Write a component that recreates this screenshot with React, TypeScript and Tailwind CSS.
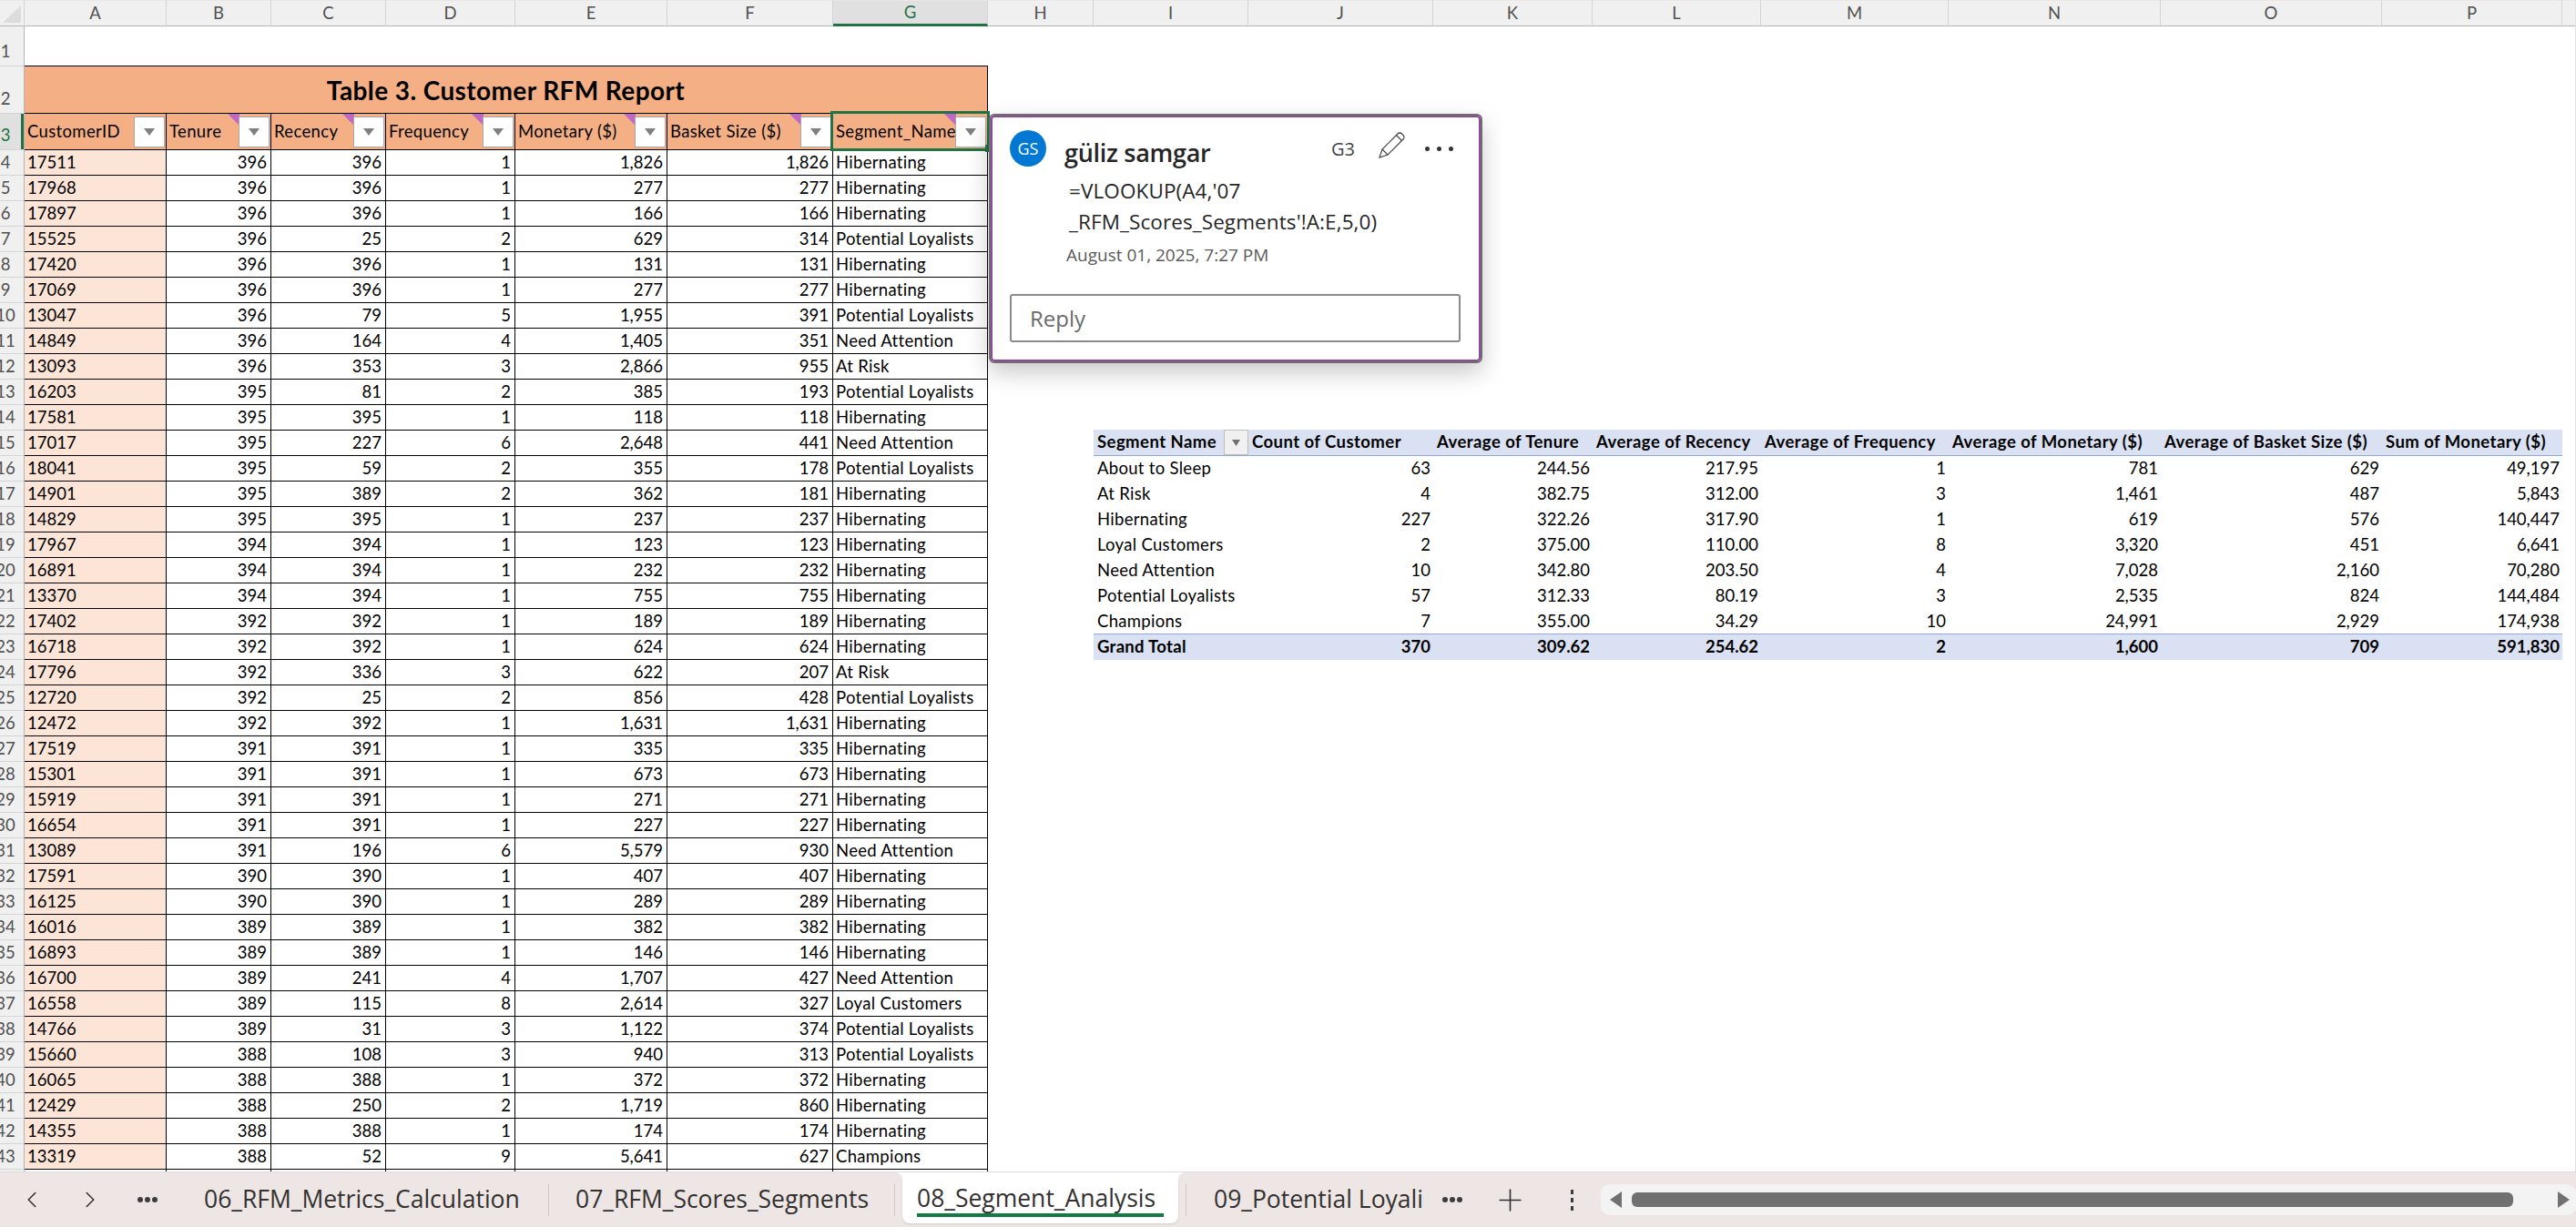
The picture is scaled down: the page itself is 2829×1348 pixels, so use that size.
import React from 'react';
import { ChevronLeft, ChevronRight, Plus } from 'lucide-react';

const COLUMNS = ['A', 'B', 'C', 'D', 'E', 'F', 'G', 'H', 'I', 'J', 'K', 'L', 'M', 'N', 'O', 'P', ''];

const H = 'Hibernating';
const PL = 'Potential Loyalists';
const NA = 'Need Attention';

const CUSTOMERS: string[][] = [
  ['17511', '396', '396', '1', '1,826', '1,826', H],
  ['17968', '396', '396', '1', '277', '277', H],
  ['17897', '396', '396', '1', '166', '166', H],
  ['15525', '396', '25', '2', '629', '314', PL],
  ['17420', '396', '396', '1', '131', '131', H],
  ['17069', '396', '396', '1', '277', '277', H],
  ['13047', '396', '79', '5', '1,955', '391', PL],
  ['14849', '396', '164', '4', '1,405', '351', NA],
  ['13093', '396', '353', '3', '2,866', '955', 'At Risk'],
  ['16203', '395', '81', '2', '385', '193', PL],
  ['17581', '395', '395', '1', '118', '118', H],
  ['17017', '395', '227', '6', '2,648', '441', NA],
  ['18041', '395', '59', '2', '355', '178', PL],
  ['14901', '395', '389', '2', '362', '181', H],
  ['14829', '395', '395', '1', '237', '237', H],
  ['17967', '394', '394', '1', '123', '123', H],
  ['16891', '394', '394', '1', '232', '232', H],
  ['13370', '394', '394', '1', '755', '755', H],
  ['17402', '392', '392', '1', '189', '189', H],
  ['16718', '392', '392', '1', '624', '624', H],
  ['17796', '392', '336', '3', '622', '207', 'At Risk'],
  ['12720', '392', '25', '2', '856', '428', PL],
  ['12472', '392', '392', '1', '1,631', '1,631', H],
  ['17519', '391', '391', '1', '335', '335', H],
  ['15301', '391', '391', '1', '673', '673', H],
  ['15919', '391', '391', '1', '271', '271', H],
  ['16654', '391', '391', '1', '227', '227', H],
  ['13089', '391', '196', '6', '5,579', '930', NA],
  ['17591', '390', '390', '1', '407', '407', H],
  ['16125', '390', '390', '1', '289', '289', H],
  ['16016', '389', '389', '1', '382', '382', H],
  ['16893', '389', '389', '1', '146', '146', H],
  ['16700', '389', '241', '4', '1,707', '427', NA],
  ['16558', '389', '115', '8', '2,614', '327', 'Loyal Customers'],
  ['14766', '389', '31', '3', '1,122', '374', PL],
  ['15660', '388', '108', '3', '940', '313', PL],
  ['16065', '388', '388', '1', '372', '372', H],
  ['12429', '388', '250', '2', '1,719', '860', H],
  ['14355', '388', '388', '1', '174', '174', H],
  ['13319', '388', '52', '9', '5,641', '627', 'Champions'],
];

const PIVOT_HEADERS = [
  'Segment Name',
  'Count of Customer',
  'Average of Tenure',
  'Average of Recency',
  'Average of Frequency',
  'Average of Monetary ($)',
  'Average of Basket Size ($)',
  'Sum of Monetary ($)',
];

const PIVOT_ROWS: string[][] = [
  ['About to Sleep', '63', '244.56', '217.95', '1', '781', '629', '49,197'],
  ['At Risk', '4', '382.75', '312.00', '3', '1,461', '487', '5,843'],
  ['Hibernating', '227', '322.26', '317.90', '1', '619', '576', '140,447'],
  ['Loyal Customers', '2', '375.00', '110.00', '8', '3,320', '451', '6,641'],
  ['Need Attention', '10', '342.80', '203.50', '4', '7,028', '2,160', '70,280'],
  ['Potential Loyalists', '57', '312.33', '80.19', '3', '2,535', '824', '144,484'],
  ['Champions', '7', '355.00', '34.29', '10', '24,991', '2,929', '174,938'],
];

const PIVOT_TOTAL = ['Grand Total', '370', '309.62', '254.62', '2', '1,600', '709', '591,830'];

const TABLE_HEADERS = [
  { label: 'CustomerID', note: false },
  { label: 'Tenure', note: true },
  { label: 'Recency', note: true },
  { label: 'Frequency', note: true },
  { label: 'Monetary ($)', note: true },
  { label: 'Basket Size ($)', note: true },
  { label: 'Segment_Name', note: true },
];

const Arrow = () => (
  <svg width="12" height="8" viewBox="0 0 12 8">
    <path d="M0 0h12L6 8z" fill="#808080" />
  </svg>
);

const RowHeader = ({ n, active = false, bottom = false }: { n: string; active?: boolean; bottom?: boolean }) => (
  <div
    className={`relative flex overflow-hidden border-r border-b border-r-[#b4b4b4] border-b-[#d4d4d4] text-[18.5px] ${
      bottom ? 'items-end pb-[1px]' : 'items-center'
    } ${active ? 'bg-[#e0e0e0] text-[#217346]' : 'bg-[#f0f0f0] text-[#505050]'}`}
  >
    <div className="flex w-[12px] shrink-0 justify-center whitespace-nowrap">{n}</div>
    {active && <div className="absolute top-0 right-0 bottom-0 w-[3px] bg-[#217346]" />}
  </div>
);

const Dots = () => (
  <div className="flex w-[24px] shrink-0 justify-center gap-[2px]">
    <span className="h-[6px] w-[6px] rounded-full bg-[#3c3c3c]" />
    <span className="h-[6px] w-[6px] rounded-full bg-[#3c3c3c]" />
    <span className="h-[6px] w-[6px] rounded-full bg-[#3c3c3c]" />
  </div>
);

const Separator = () => <div className="h-[36px] w-px shrink-0 bg-[#d0cbc9]" />;

const PivotCell = ({ value, col, row }: { value: string; col: number; row: 'head' | 'body' | 'last' | 'total' }) => {
  const align = col === 0 || row === 'head' ? 'justify-start' : 'justify-end';
  const tone =
    row === 'head'
      ? '-mt-px bg-[#d9e1f2] border-b border-[#8ea9db] font-bold tracking-[0.45px]'
      : row === 'total'
        ? 'bg-[#d9e1f2] font-bold'
        : row === 'last'
          ? 'border-b border-[#8ea9db]'
          : '';
  return (
    <div
      className={`relative flex items-center whitespace-nowrap px-[4px] pr-[3px] ${align} ${tone} ${
        col === 0 && row !== 'head' ? 'tracking-[0.3px]' : ''
      }`}
    >
      {value}
      {row === 'head' && col === 0 && (
        <div className="absolute top-0 right-0 flex h-[28px] w-[27px] items-center justify-center border border-[#bdbdbd] bg-[#f1f1f1]">
          <svg width="9" height="7" viewBox="0 0 9 7">
            <path d="M0 0h9L4.5 7z" fill="#707070" />
          </svg>
        </div>
      )}
    </div>
  );
};

export default function App() {
  return (
    <div className="relative h-[1348px] w-[2829px] overflow-hidden bg-white font-['Lato',sans-serif] text-[18.5px] text-black">
      <div className="h-[1287px] overflow-hidden border-r border-[#e2e2e2]">
        <div className="grid grid-cols-[27px_156px_115px_126px_142px_167px_182px_170px_116px_170px_203px_175px_185px_206px_233px_243px_198px_15px] grid-rows-[29px_44px_52px_40px] auto-rows-[28px]">
          <div className="flex items-end justify-center border-t border-r border-b border-t-[#eee6e4] border-r-[#d4d4d4] border-b-[#b4b4b4] bg-[#f0f0f0] pb-[3px]">
            <svg width="20" height="19" viewBox="0 0 20 19">
              <path d="M20 0v19H0z" fill="#dcdcdc" />
            </svg>
          </div>
          {COLUMNS.map((c) => (
            <div
              key={c}
              className={`flex items-center justify-center border-t border-r border-t-[#eee6e4] border-r-[#d4d4d4] text-[18.5px] ${
                c === 'G'
                  ? 'border-b-[3px] border-b-[#217346] bg-[#e0e0e0] text-[#217346]'
                  : 'border-b border-b-[#b4b4b4] bg-[#f0f0f0] text-[#505050]'
              }`}
            >
              {c}
            </div>
          ))}

          <RowHeader n="1" bottom />
          <div className="col-span-7 border-b border-black" />
          <div className="col-span-10" />

          <RowHeader n="2" bottom />
          <div className="col-span-7 flex items-center justify-center border-r border-b border-black bg-[#f4b084] text-[28px] font-bold tracking-[0.4px]">
            Table 3. Customer RFM Report
          </div>
          <div className="col-span-10" />

          <RowHeader n="3" active bottom />
          {TABLE_HEADERS.map((h) => (
            <div
              key={h.label}
              className="relative flex items-center overflow-hidden whitespace-nowrap border-r border-b border-black bg-[#f4b084] px-[3px] tracking-[0.35px]"
            >
              {h.label}
              {h.note && (
                <svg className="absolute top-0 right-[34px]" width="13" height="13" viewBox="0 0 13 13">
                  <path d="M0 0h13v13z" fill="#bf68c6" />
                </svg>
              )}
              <div className="absolute top-[3px] right-[1px] flex h-[34px] w-[34px] items-center justify-center border border-[#a8a8a8] bg-white">
                <Arrow />
              </div>
            </div>
          ))}
          <div className="col-span-10" />

          {CUSTOMERS.map((row, i) => {
            const rowNumber = i + 4;
            const pivotIndex = rowNumber - 16;
            return (
              <React.Fragment key={rowNumber}>
                <RowHeader n={String(rowNumber)} />
                {row.map((value, col) => (
                  <div
                    key={col}
                    className={`flex items-center whitespace-nowrap border-r border-b border-black px-[3px] ${
                      col === 0 ? 'bg-[#fce4d6]' : ''
                    } ${col > 0 && col < 6 ? 'justify-end pr-[4px]' : ''} ${col === 6 ? 'tracking-[0.3px]' : ''}`}
                  >
                    {value}
                  </div>
                ))}
                <div />
                {rowNumber === 15 ? (
                  PIVOT_HEADERS.map((v, c) => <PivotCell key={c} value={v} col={c} row="head" />)
                ) : pivotIndex >= 0 && pivotIndex < PIVOT_ROWS.length ? (
                  PIVOT_ROWS[pivotIndex].map((v, c) => (
                    <PivotCell key={c} value={v} col={c} row={pivotIndex === 6 ? 'last' : 'body'} />
                  ))
                ) : rowNumber === 23 ? (
                  PIVOT_TOTAL.map((v, c) => <PivotCell key={c} value={v} col={c} row="total" />)
                ) : (
                  <div className="col-span-8" />
                )}
                <div />
              </React.Fragment>
            );
          })}

          <RowHeader n="" />
          {TABLE_HEADERS.map((h) => (
            <div key={h.label} className="border-r border-black" />
          ))}
        </div>
      </div>

      {/* selected cell G3 */}
      <div className="pointer-events-none absolute top-[122px] left-[912px] h-[44px] w-[175px] border-[3px] border-[#217346]">
        <div className="absolute right-[-4px] bottom-[-4px] h-[8px] w-[6px] bg-[#217346]" />
      </div>

      {/* threaded comment card */}
      <div className="absolute top-[125px] left-[1086px] h-[274px] w-[542px] rounded-[6px] border-[2px] border-[#6e6e6e] bg-white shadow-[0_10px_26px_rgba(0,0,0,0.22)] font-['Open_Sans',sans-serif]">
        <div className="h-full rounded-[4px] border-[2px] border-[#8f4a9e] pt-[14px] pr-[20px] pl-[19px]">
          <div className="flex items-start">
            <div className="flex h-[40px] w-[40px] shrink-0 items-center justify-center rounded-full bg-[#0078d4] text-[18px] text-white">
              GS
            </div>
            <div className="ml-[20px] mt-[5px] w-[293px] text-[27px] leading-[40px] font-semibold tracking-[-0.3px] text-[#252525]">
              güliz samgar
            </div>
            <div className="mt-[6px] w-[42px] text-[20px] leading-[30px] text-[#444]">G3</div>
            <svg className="mt-[2px] ml-[10px]" width="29" height="29" viewBox="0 0 29 29" fill="none" stroke="#444" strokeWidth="1.2">
              <path d="M1 28l3-9L21 2q2.2-2 4.5 0L27 3.5q2 2.4 0 4.5L10 25z" />
              <path d="M4 19l6 6M19.5 3.5l6 6" />
            </svg>
            <div className="mt-[18px] ml-[22px] flex gap-[8px]">
              <span className="h-[5px] w-[5px] rounded-full bg-[#333]" />
              <span className="h-[5px] w-[5px] rounded-full bg-[#333]" />
              <span className="h-[5px] w-[5px] rounded-full bg-[#333]" />
            </div>
          </div>
          <div className="ml-[65px] mt-[5px] text-[22.5px] leading-[34px] tracking-[0.1px] text-[#252525]">
            =VLOOKUP(A4,'07
            <br />
            _RFM_Scores_Segments'!A:E,5,0)
          </div>
          <div className="ml-[62px] mt-[5px] text-[19px] leading-[28px] text-[#5a5a5a]">
            August 01, 2025, 7:27 PM
          </div>
          <div className="mt-[29px] flex h-[53px] w-[495px] items-center rounded-[3px] border-[2px] border-[#8a8a8a] pl-[20px] text-[24px] text-[#6a6a6a]">
            Reply
          </div>
        </div>
      </div>

      {/* sheet tabs */}
      <div className="flex h-[61px] items-center border-t border-[#e0dcdb] bg-[#eee6e4] pl-[20px] font-['Open_Sans',sans-serif] text-[26.5px] text-[#323130]">
        <ChevronLeft size={30} strokeWidth={1.25} className="shrink-0" />
        <ChevronRight size={30} strokeWidth={1.25} className="ml-[34px] shrink-0" />
        <div className="ml-[36px]">
          <Dots />
        </div>
        <div className="ml-[50px] w-[378px] shrink-0 whitespace-nowrap">06_RFM_Metrics_Calculation</div>
        <Separator />
        <div className="ml-[29px] w-[350px] shrink-0 whitespace-nowrap">07_RFM_Scores_Segments</div>
        <Separator />
        <div className="relative ml-[8px] flex h-[56px] w-[303px] shrink-0 flex-col self-start rounded-b-[8px] bg-white px-[16px] pt-[12px] shadow-[0_1px_2px_rgba(0,0,0,0.12)]">
          <div className="h-[32px] whitespace-nowrap font-medium leading-[32px]">08_Segment_Analysis</div>
          <div className="mt-[1px] h-[4px] bg-[#107c41]" />
          <div className="absolute top-0 left-[-8px] h-[8px] w-[8px] bg-white">
            <div className="h-full rounded-tr-[8px] bg-[#eee6e4]" />
          </div>
          <div className="absolute top-0 right-[-8px] h-[8px] w-[8px] bg-white">
            <div className="h-full rounded-tl-[8px] bg-[#eee6e4]" />
          </div>
        </div>
        <div className="ml-[8px]">
          <Separator />
        </div>
        <div className="ml-[30px] w-[229px] shrink-0 overflow-hidden whitespace-nowrap">09_Potential Loyalists</div>
        <div className="ml-[21px]">
          <Dots />
        </div>
        <Plus size={39} strokeWidth={1} className="ml-[32px] shrink-0" />
        <div className="ml-[44px] flex w-[8px] shrink-0 flex-col items-center gap-[4px]">
          <span className="h-[5px] w-[3px] bg-[#3c3c3c]" />
          <span className="h-[5px] w-[3px] bg-[#3c3c3c]" />
          <span className="h-[5px] w-[3px] bg-[#3c3c3c]" />
        </div>
        <div className="ml-[28px] flex h-[34px] flex-1 items-center rounded-[10px] bg-[#f3f3f3] pl-[10px]">
          <svg width="13" height="18" viewBox="0 0 13 18">
            <path d="M13 0v18L0 9z" fill="#707070" />
          </svg>
          <div className="ml-[11px] h-[16px] w-[968px] rounded-[6px] bg-[#707070]" />
          <svg className="ml-[49px]" width="13" height="18" viewBox="0 0 13 18">
            <path d="M0 0v18L13 9z" fill="#707070" />
          </svg>
        </div>
      </div>
    </div>
  );
}
